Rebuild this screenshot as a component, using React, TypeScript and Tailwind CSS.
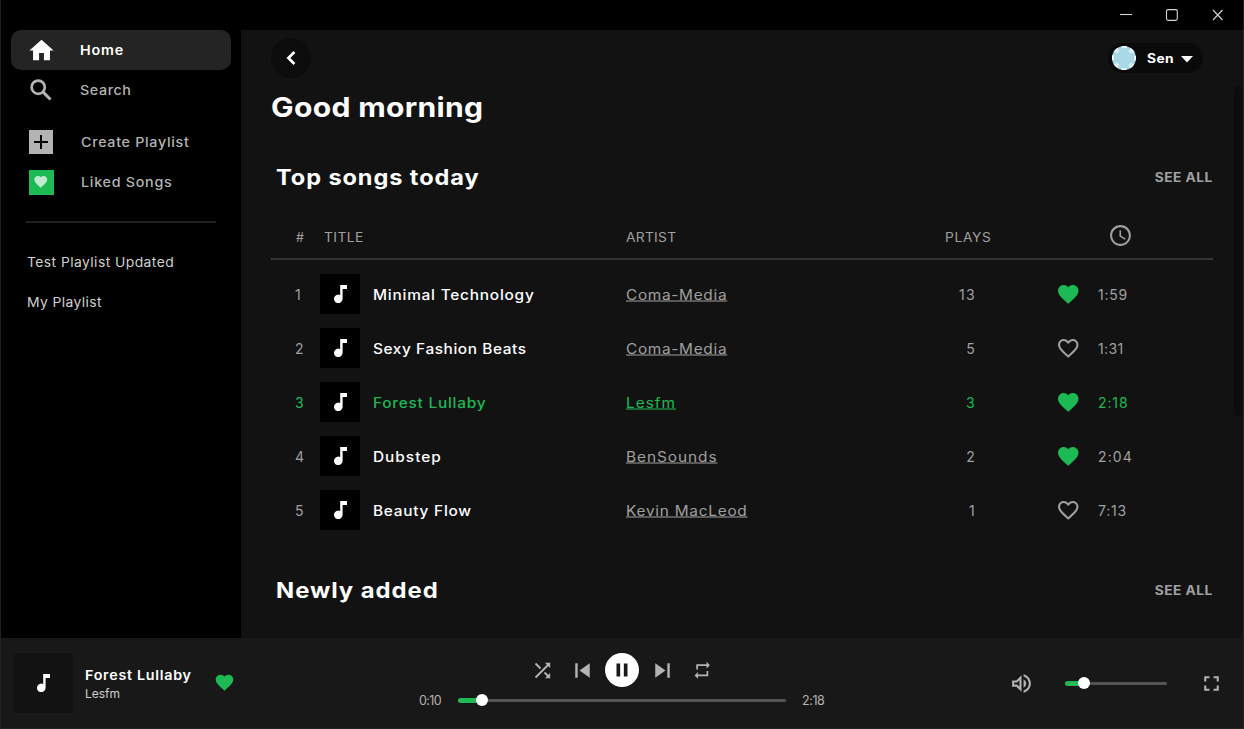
import type { ReactNode } from "react";
import {
  MdFavorite,
  MdFavoriteBorder,
  MdFullscreen,
  MdHome,
  MdOutlineVolumeUp,
  MdPause,
  MdRepeat,
  MdSchedule,
  MdShuffle,
  MdSkipNext,
  MdSkipPrevious,
} from "react-icons/md";

type Song = {
  title: string;
  titleTracking: string;
  artist: string;
  artistTracking: string;
  plays: number;
  time: string;
  timeTracking: string;
  liked: boolean;
  active?: boolean;
};

const songs: Song[] = [
  { title: "Minimal Technology", titleTracking: "tracking-[0.7px]", artist: "Coma-Media", artistTracking: "tracking-[0.62px]", plays: 13, time: "1:59", timeTracking: "tracking-[0.75px]", liked: true },
  { title: "Sexy Fashion Beats", titleTracking: "tracking-[0.52px]", artist: "Coma-Media", artistTracking: "tracking-[0.62px]", plays: 5, time: "1:31", timeTracking: "tracking-[0.4px]", liked: false },
  { title: "Forest Lullaby", titleTracking: "tracking-[0.69px]", artist: "Lesfm", artistTracking: "tracking-[0.9px]", plays: 3, time: "2:18", timeTracking: "tracking-[0.9px]", liked: true, active: true },
  { title: "Dubstep", titleTracking: "tracking-[0.9px]", artist: "BenSounds", artistTracking: "tracking-[0.85px]", plays: 2, time: "2:04", timeTracking: "tracking-[1.1px]", liked: true },
  { title: "Beauty Flow", titleTracking: "tracking-[0.68px]", artist: "Kevin MacLeod", artistTracking: "tracking-[0.67px]", plays: 1, time: "7:13", timeTracking: "tracking-[0.8px]", liked: false },
];

function NoteIcon() {
  return (
    <svg width="13" height="18" viewBox="0 0 13 18" fill="currentColor">
      <path d="M6.2 0H13v4H8.6v9.8A4.3 4.3 0 1 1 6.2 10z" />
    </svg>
  );
}

function SearchIcon() {
  return (
    <svg width="22" height="22" viewBox="0 0 22 22" fill="none" stroke="currentColor" strokeWidth="2.7">
      <circle cx="8.2" cy="8.2" r="6.6" />
      <path d="M12.9 12.9l7.6 7.6" strokeWidth="3" />
    </svg>
  );
}

function BackIcon() {
  return (
    <svg width="10" height="14" viewBox="0 0 10 14" fill="none" stroke="currentColor" strokeWidth="2.7">
      <path d="M8.4 1L2.4 7l6 6" />
    </svg>
  );
}

function NavItem({ icon, children, active, inset }: { icon: ReactNode; children: ReactNode; active?: boolean; inset?: boolean }) {
  return (
    <div className={`flex h-10 items-center rounded-[10px] ${active ? "bg-[#242424] font-semibold text-white" : "font-medium text-[#b3b3b3]"}`}>
      <div className={`flex w-[60px] shrink-0 justify-center ${inset ? "mr-2.5" : "mr-[8.5px]"}`}>{icon}</div>
      {children}
    </div>
  );
}

function Sidebar() {
  return (
    <aside className="flex w-[241px] shrink-0 flex-col border-l border-[#202020] bg-black pr-[10px] pl-[10px] text-[13px] leading-5">
      <NavItem active icon={<MdHome size={29} />}>
        <span className="origin-left scale-x-110 tracking-[0.75px]">Home</span>
      </NavItem>
      <NavItem icon={<SearchIcon />}>
        <span className="origin-left scale-x-110 tracking-[0.53px]">Search</span>
      </NavItem>
      <div className="mt-3">
        <NavItem
          inset
          icon={
            <span className="flex size-6 items-center justify-center bg-[#b3b3b3]">
              <svg width="14" height="14" viewBox="0 0 14 14" fill="#000">
                <path d="M6 0h2v6h6v2H8v6H6V8H0V6h6z" />
              </svg>
            </span>
          }
        >
          <span className="origin-left scale-x-110 tracking-[0.63px]">Create Playlist</span>
        </NavItem>
        <NavItem
          inset
          icon={
            <span className="flex size-[25px] items-center justify-center bg-[#1db954] text-[#bfeccf]">
              <MdFavorite size={15.5} />
            </span>
          }
        >
          <span className="origin-left scale-x-110 tracking-[0.66px]">Liked Songs</span>
        </NavItem>
      </div>
      <div className="mt-[19px] mr-[15px] ml-[15px] h-0.5 bg-[#212121]" />
      <div className="mt-[29px] ml-4 flex flex-col gap-5 text-[#cfcfcf]">
        <span className="origin-left scale-x-[1.07] tracking-[0.39px]">Test Playlist Updated</span>
        <span className="origin-left scale-x-[1.07] tracking-[0.35px]">My Playlist</span>
      </div>
    </aside>
  );
}

function SectionHeader({ children }: { children: ReactNode }) {
  return (
    <div className="flex h-8 items-center justify-between pl-[5px]">
      {children}
      <span className="origin-right scale-x-110 text-[12.5px] font-bold tracking-[0.4px] text-[#a0a0a0]">SEE ALL</span>
    </div>
  );
}

function SongRow({ song, index }: { song: Song; index: number }) {
  const tone = song.active ? "text-[#1db954]" : "text-[#a0a0a0]";
  return (
    <div className={`grid h-10 grid-cols-[49px_53px_253px_264px_86px_122px_1fr] items-center text-[14px] leading-5 ${tone}`}>
      <span className="pt-0.5 pl-6">{index}</span>
      <div className="flex size-10 items-center justify-center bg-black pb-px text-white">
        <NoteIcon />
      </div>
      <span className={`origin-left scale-x-110 pt-0.5 font-medium ${song.titleTracking} ${song.active ? "" : "text-white"}`}>{song.title}</span>
      <span className={`origin-left scale-x-110 pt-0.5 underline decoration-current/50 decoration-2 [text-decoration-skip-ink:none] [text-underline-offset:0px] ${song.artistTracking}`}>{song.artist}</span>
      <span className="pt-0.5 text-right tracking-[1.3px]">{song.plays}</span>
      <span className={`pl-20 ${song.liked ? "text-[#1db954]" : ""}`}>
        {song.liked ? <MdFavorite size={24.5} /> : <MdFavoriteBorder size={24.5} />}
      </span>
      <span className={`pt-0.5 ${song.timeTracking}`}>{song.time}</span>
    </div>
  );
}

function UserMenu() {
  return (
    <div className="mt-[5px] mr-[10px] flex h-[30px] w-[95px] items-center rounded-full bg-[#0a0a0a] pl-1 text-white">
      <svg width="24" height="24" viewBox="0 0 24 24">
        <circle cx="12" cy="12" r="12" fill="#a8d8e5" />
        <circle cx="12" cy="12" r="11.2" fill="none" stroke="#fff" strokeWidth="1.6" strokeDasharray="4.8 3.996" strokeDashoffset="2.4" />
        <path d="M5 5l3-1-4 4zM19 5l-3-1 4 4zM5 19l3 1-4-4zM19 19l-3 1 4-4z" fill="#fff" />
      </svg>
      <span className="ml-[11px] w-[34px] origin-left scale-x-110 pt-0.5 text-[12.5px] font-bold tracking-[0.4px]">Sen</span>
      <svg width="12" height="7" viewBox="0 0 12 7" fill="currentColor" className="mt-0.5">
        <path d="M0 0h12L6 6.6z" />
      </svg>
    </div>
  );
}

function Main() {
  return (
    <main className="relative min-w-0 flex-1 overflow-hidden border-r border-[#2b2b2b] bg-[#121212] pt-2 pr-[30px] pl-[30px]">
      <div className="flex h-10 items-start justify-between">
        <button className="flex size-10 items-center justify-center rounded-full bg-[#0c0c0c] text-white">
          <BackIcon />
        </button>
        <UserMenu />
      </div>
      <h1 className="mt-2.5 h-10 origin-left scale-x-[1.115] text-[27px] leading-10 font-bold tracking-[0.28px] whitespace-nowrap text-white">Good morning</h1>
      <div className="mt-[34px]">
        <SectionHeader>
          <h2 className="origin-left scale-x-[1.12] text-[21px] font-bold tracking-[0.83px] text-white">Top songs today</h2>
        </SectionHeader>
      </div>
      <div className="mt-[27px] grid h-[39px] grid-cols-[53px_302px_319px_162px_1fr] items-start border-b-2 border-[#333333] text-[12.5px] leading-[33px] text-[#a0a0a0]">
        <span className="pl-[25px]">#</span>
        <span className="origin-left scale-x-110 tracking-[0.4px]">TITLE</span>
        <span className="origin-left scale-x-110 tracking-[0.27px]">ARTIST</span>
        <span className="origin-left scale-x-110 tracking-[0.6px]">PLAYS</span>
        <MdSchedule size={25} className="mt-0.5 ml-[0.5px]" />
      </div>
      <div className="mt-3.5 flex flex-col gap-3.5">
        {songs.map((song, i) => (
          <SongRow key={song.title} song={song} index={i + 1} />
        ))}
      </div>
      <div className="mt-[45px]">
        <SectionHeader>
          <h2 className="origin-left scale-x-[1.135] text-[21px] font-bold tracking-[0.85px] text-white">Newly added</h2>
        </SectionHeader>
      </div>
      <div className="absolute top-14 right-px h-[330px] w-2 rounded-full bg-[#0c0c0c]" />
    </main>
  );
}

function Slider({ className, value }: { className: string; value: number }) {
  return (
    <div className={`relative flex h-3 items-center ${className}`}>
      <div className="h-[3px] w-full rounded-full bg-[#535353]" />
      <div className="absolute left-0 h-[5px] rounded-full bg-[#1db954]" style={{ width: value }} />
      <div className="absolute size-3 -translate-x-1/2 rounded-full bg-white" style={{ left: value }} />
    </div>
  );
}

function Player() {
  return (
    <footer className="flex h-[91px] shrink-0 border-x border-b border-[#222222] bg-[#181818] text-[#b3b3b3]">
      <div className="flex h-[90px] w-[411px] items-center pl-3">
        <div className="flex size-[60px] items-center justify-center bg-[#121212] text-white">
          <NoteIcon />
        </div>
        <div className="ml-3 flex w-[129px] flex-col">
          <span className="origin-left scale-x-110 text-[13px] leading-5 font-semibold tracking-[0.66px] text-white">Forest Lullaby</span>
          <span className="text-[12px] leading-[17px] text-[#cfcfcf]">Lesfm</span>
        </div>
        <MdFavorite size={21} className="mb-px text-[#1db954]" />
      </div>
      <div className="flex w-[420px] flex-col items-center">
        <div className="mt-[15px] flex h-[34px] w-[200px] items-center">
          <span className="flex w-10 justify-center"><MdShuffle size={23} /></span>
          <span className="flex w-10 justify-center"><MdSkipPrevious size={29} /></span>
          <span className="flex w-10 justify-center">
            <span className="flex size-[34px] shrink-0 items-center justify-center rounded-full bg-white text-[#181818]">
              <MdPause size={22} />
            </span>
          </span>
          <span className="flex w-10 justify-center"><MdSkipNext size={29} /></span>
          <span className="flex w-10 justify-center"><MdRepeat size={20.5} /></span>
        </div>
        <div className="mt-[5px] flex h-4 w-full items-center text-[12.5px] leading-4">
          <span className="w-[46px] pt-px pl-[7px] tracking-[-0.6px]">0:10</span>
          <Slider className="w-[328px]" value={24} />
          <span className="pt-px pl-4 tracking-[-0.4px]">2:18</span>
        </div>
      </div>
      <div className="flex h-[90px] flex-1 items-center pl-[177px]">
        <MdOutlineVolumeUp size={25} />
        <Slider className="ml-[31px] w-[102px]" value={19} />
        <MdFullscreen size={25} className="ml-8" />
      </div>
    </footer>
  );
}

export default function App() {
  return (
    <div className="flex h-[729px] w-[1244px] flex-col overflow-hidden bg-black font-['Inter',sans-serif]">
      <header className="flex h-[30px] shrink-0 items-center justify-end border-x border-[#202020] pr-5 text-[#d6d6d6]">
        <svg width="104" height="12" viewBox="0 0 104 12" fill="none" stroke="currentColor" strokeWidth="1.1">
          <path d="M1 5.5h12" />
          <rect x="47.5" y="0.6" width="10.8" height="10.8" rx="1.8" />
          <path d="M94 1l9.5 10M103.5 1L94 11" />
        </svg>
      </header>
      <div className="flex min-h-0 flex-1">
        <Sidebar />
        <Main />
      </div>
      <Player />
    </div>
  );
}
